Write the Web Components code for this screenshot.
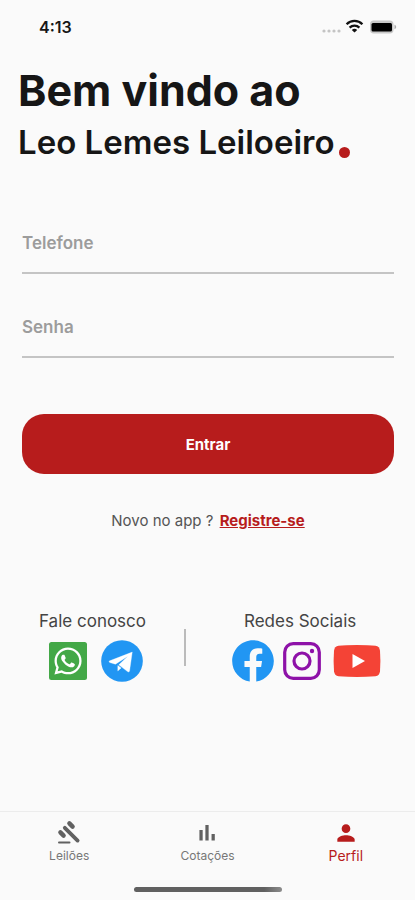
<!DOCTYPE html>
<html lang="pt-BR">
  <head>
    <meta charset="utf-8">
    <meta name="viewport" content="width=device-width, initial-scale=1">
    <title>Leo Lemes Leiloeiro</title>
    <style>
      body {
        margin: 0;
        background: #fafafa;
        color: #161616;
        font-family: Inter, Roboto, sans-serif;
      }
    </style>
  </head>
  <body>
    <template id="loginTemplate">
      <style>
        :host {
          display: flex;
          flex-direction: column;
          min-height: 100vh;
        }
        main {
          flex: 1;
          padding: 12px 21px 0 22px;
        }
        form {
          display: grid;
          gap: 24px;
          margin-top: 50px;
        }
        button {
          height: 60px;
          margin-top: 32px;
          border: 0;
          border-radius: 22px;
          background: #b71c1c;
          color: #fff;
          font: 700 15px Inter, Roboto, sans-serif;
        }
        .register {
          margin: 37px 0 0;
          text-align: center;
          font-size: 15px;
          line-height: 20px;
          color: #555;
        }
        .register a {
          color: #b71c1c;
          font-weight: 700;
          margin-left: 2px;
        }
        .contact {
          display: flex;
          justify-content: space-between;
          margin-top: 80px;
          padding: 0 10px 0 17px;
        }
        .contact hr {
          width: 2px;
          height: 37px;
          margin: 18px 8px 0 0;
          border: 0;
          background: #bbb;
        }
      </style>
      <status-bar time="4:13"></status-bar>
      <main>
        <welcome-title>
          <span slot="greeting">Bem vindo ao</span>
          <span slot="name">Leo Lemes Leiloeiro</span>
        </welcome-title>
        <form>
          <line-field label="Telefone" type="tel"></line-field>
          <line-field label="Senha" type="password"></line-field>
          <button type="button">Entrar</button>
        </form>
        <p class="register">Novo no app ? <a href="#registro">Registre-se</a></p>
        <div class="contact">
          <link-group>
            <span slot="title">Fale conosco</span>
            <social-link icon="whatsapp" label="WhatsApp"></social-link>
            <social-link icon="telegram" label="Telegram"></social-link>
          </link-group>
          <hr>
          <link-group>
            <span slot="title">Redes Sociais</span>
            <social-link icon="facebook" label="Facebook"></social-link>
            <social-link icon="instagram" label="Instagram"></social-link>
            <social-link icon="youtube" label="YouTube"></social-link>
          </link-group>
        </div>
      </main>
      <tab-bar>
        <tab-item icon="gavel" href="#leiloes">Leilões</tab-item>
        <tab-item icon="chart" href="#cotacoes">Cotações</tab-item>
        <tab-item icon="person" href="#perfil" active>Perfil</tab-item>
      </tab-bar>
    </template>

    <template id="statusTemplate">
      <style>
        :host {
          display: flex;
          align-items: center;
          height: 54px;
          padding: 0 18px 0 39px;
          font-size: 16px;
          font-weight: 600;
        }
        time {
          flex: 1;
        }
        svg {
          display: block;
        }
      </style>
      <time></time>
      <svg width="76" height="16" viewBox="0 0 76 16" aria-hidden="true">
        <g fill="#c4c4c4">
          <circle cx="3" cy="12" r="1.6"/><circle cx="8" cy="12" r="1.6"/>
          <circle cx="13" cy="12" r="1.6"/><circle cx="18" cy="12" r="1.6"/>
        </g>
        <g fill="none" stroke="#111" stroke-width="2.3">
          <path d="M25.6 5.3a11 11 0 0 1 15.8 0M28.6 8.6a7 7 0 0 1 9.8 0"/>
        </g>
        <path d="M33.5 13.6 30.8 11a3.9 3.9 0 0 1 5.4 0z" fill="#111"/>
        <rect x="49" y="1.5" width="23.5" height="13" rx="3.8" fill="#c8c8c8"/>
        <rect x="50.5" y="4" width="20.5" height="8.5" rx="1.5" fill="#000"/>
        <path d="M73.5 5.8c2.2.7 2.2 3.7 0 4.4z" fill="#aaa"/>
      </svg>
    </template>

    <template id="titleTemplate">
      <style>
        :host {
          display: block;
          margin-left: -4px;
        }
        h1 {
          margin: 0;
          font-weight: 600;
        }
        .greeting {
          display: block;
          font-size: 43px;
          font-weight: 700;
          line-height: 48px;
        }
        .name {
          display: flex;
          align-items: flex-end;
          gap: 4px;
          font-size: 33px;
          line-height: 44px;
          margin-top: 6px;
        }
        .dot {
          width: 11px;
          height: 11px;
          margin-bottom: 6px;
          border-radius: 50%;
          background: #b71c1c;
        }
      </style>
      <h1>
        <span class="greeting"><slot name="greeting"></slot></span>
        <span class="name"><slot name="name"></slot><i class="dot"></i></span>
      </h1>
    </template>

    <template id="fieldTemplate">
      <style>
        :host {
          display: grid;
          height: 60px;
          border-bottom: 2px solid #c4c4c4;
          box-sizing: border-box;
        }
        /* the label shares the cell with the input, like a hint */
        label, input {
          grid-area: 1 / 1;
          font: 600 17px Inter, Roboto, sans-serif;
        }
        label {
          align-self: center;
          color: #9c9c9c;
          pointer-events: none;
        }
        input {
          min-width: 0;
          padding: 0;
          border: 0;
          outline: 0;
          background: none;
          color: #333;
        }
        input:not(:placeholder-shown) + label {
          visibility: hidden;
        }
      </style>
      <input id="field" placeholder=" ">
      <label for="field"></label>
    </template>

    <template id="groupTemplate">
      <style>
        :host {
          display: block;
        }
        .title {
          padding-left: var(--title-indent, 0);
          font-size: 17px;
          line-height: 20px;
          color: #444;
        }
        .links {
          display: flex;
          gap: 8px;
          margin-top: 9px;
        }
      </style>
      <div class="title"><slot name="title"></slot></div>
      <div class="links"><slot></slot></div>
    </template>

    <template id="tabBarTemplate">
      <style>
        :host {
          display: block;
          height: 88px;
          border-top: 1px solid #ececec;
        }
        nav {
          display: grid;
          grid-template-columns: repeat(3, 1fr);
          height: 75px;
        }
        .home {
          width: 148px;
          height: 5px;
          margin: 0 auto;
          border-radius: 3px;
          background: linear-gradient(to right, #606060 88%, #8c8c8c);
        }
      </style>
      <nav><slot></slot></nav>
      <div class="home"></div>
    </template>

    <template id="tabTemplate">
      <style>
        :host {
          display: block;
          color: #777;
          font-size: 12px;
        }
        :host([active]) {
          color: #b71c1c;
          font-size: 14px;
        }
        a {
          display: flex;
          flex-direction: column;
          align-items: center;
          padding-top: 8px;
          color: inherit;
          text-decoration: none;
          line-height: 16px;
        }
        svg {
          display: block;
          width: 26px;
          height: 26px;
          margin-bottom: 2px;
          fill: #616161;
        }
        :host([active]) svg {
          fill: #b71c1c;
        }
      </style>
      <a><span class="icon"></span><slot></slot></a>
    </template>

    <login-page></login-page>

    <script>
      const socialIcons = {
        whatsapp: `<svg width="54" height="42" viewBox="-10 -2 54 42">
          <rect width="38" height="38" rx="2.5" fill="#43a847"/>
          <g transform="scale(.0848) translate(0 -32)" fill="#fff">
            <path fill-rule="evenodd" d="M223.9 413.2c-26.6 0-52.7-6.7-75.8-19.3L64 416l22.5-82.2c-13.9-24-21.2-51.3-21.2-79.3C65.4 167.1 136.5 96 223.9 96c42.4 0 82.2 16.5 112.2 46.5 29.9 30 47.9 69.8 47.9 112.2 0 87.4-72.7 158.5-160.1 158.5zM224 122.8c-72.7 0-131.8 59.1-131.9 131.8 0 24.9 7 49.2 20.2 70.1l3.1 5-13.3 48.6 49.9-13.1 4.8 2.9c20.2 12 43.4 18.4 67.1 18.4h.1c72.6 0 133.3-59.1 133.3-131.8 0-35.2-15.2-68.3-40.1-93.2-25-25-58-38.7-93.2-38.7z"/>
            <path d="M301.5 311.2c-3.3 9.3-19.1 17.7-26.7 18.8-12.6 1.9-22.4.9-47.5-9.9-39.7-17.2-65.7-57.2-67.7-59.8-2-2.6-16.2-21.5-16.2-41s10.2-29.1 13.9-33.1c3.6-4 7.9-5 10.6-5 2.6 0 5.3 0 7.6.1 2.4.1 5.7-.9 8.9 6.8 3.3 7.9 11.2 27.4 12.2 29.4s1.7 4.3.3 6.9c-7.6 15.2-15.7 14.6-11.6 21.6 15.3 26.3 30.6 35.4 53.9 47.1 4 2 6.3 1.7 8.6-1 2.3-2.6 9.9-11.6 12.5-15.5 2.6-4 5.3-3.3 8.9-2 3.6 1.3 23.1 10.9 27.1 12.9s6.6 3 7.6 4.6c.9 1.9.9 9.9-2.4 19.1z"/>
          </g></svg>`,
        telegram: `<svg width="42" height="42" viewBox="0 0 125 125">
          <circle cx="62.5" cy="62.5" r="62" fill="#2196f3"/>
          <path d="M93 36 26 62c-3 1-2 4 0 5l17 5 37-24-27 26 26 20c3 2 5 1 6-2zM50 76v16l10-9z" fill="#fff" stroke="#fff" stroke-linejoin="round"/></svg>`,
        facebook: `<svg width="42" height="42" viewBox="6 6 500 500">
          <path fill="#2196f3" d="M504 256C504 119 393 8 256 8S8 119 8 256c0 123.8 90.7 226.4 209.3 245V327.7h-63V256h63v-54.6c0-62.2 37-96.5 93.6-96.5 27.2 0 55.5 4.8 55.5 4.8v61h-31.2c-30.8 0-40.4 19.2-40.4 38.8V256h68.7l-11 71.7h-57.7V501C413.3 482.4 504 379.8 504 256z"/></svg>`,
        instagram: `<svg width="40" height="42" viewBox="0 0 40 42" fill="none" stroke="#8e12a8" stroke-width="3.2">
          <rect x="2.7" y="3.7" width="34.6" height="34.6" rx="8.5"/>
          <circle cx="20" cy="21" r="8"/>
          <circle cx="30" cy="11" r="2.2" fill="#8e12a8" stroke="none"/></svg>`,
        youtube: `<svg width="54" height="42" viewBox="0 0 54 42">
          <path fill="#f44336" d="M27 5q12 0 18.5.7 4 .5 4.5 5 .8 10.3 0 20.6-.5 4.5-4.5 5-18.5 1.3-37 0-4-.5-4.5-5-.8-10.3 0-20.6.5-4.5 4.5-5Q15 5 27 5z"/>
          <path fill="#fff" d="M22.5 14v14L35 21z"/></svg>`
      };

      const tabIcons = {
        gavel: `<svg viewBox="-1 0 26 26">
          <g fill="none" stroke="#616161" stroke-linecap="round">
            <path stroke-width="3.8" d="M7.8 7.8l12.8 12.8"/>
            <path stroke-width="4.4" d="M12.4 3.4l3.2 3.2M3.4 12.4l3.2 3.2"/>
            <path stroke-width="2" d="M2 22.5h10.5"/>
          </g></svg>`,
        chart: `<svg viewBox="0 0 24 24"><path d="M5 9.2h3V19H5zM10.5 4.5h3V19h-3zM16.2 13h3v6h-3z"/></svg>`,
        person: `<svg viewBox="0 0 24 24"><path d="M12 12c2.2 0 4-1.8 4-4s-1.8-4-4-4-4 1.8-4 4 1.8 4 4 4zm0 2c-2.7 0-8 1.3-8 4v2h16v-2c0-2.7-5.3-4-8-4z"/></svg>`
      };

      class TemplateElement extends HTMLElement {
        constructor(templateId) {
          super();
          this.attachShadow({ mode: 'open' });
          this.shadowRoot.append(
            document.getElementById(templateId).content.cloneNode(true)
          );
        }
      }

      customElements.define('status-bar', class extends TemplateElement {
        constructor() {
          super('statusTemplate');
        }

        connectedCallback() {
          this.shadowRoot.querySelector('time').textContent = this.getAttribute('time');
        }
      });

      customElements.define('welcome-title', class extends TemplateElement {
        constructor() {
          super('titleTemplate');
        }
      });

      customElements.define('line-field', class extends TemplateElement {
        constructor() {
          super('fieldTemplate');
        }

        connectedCallback() {
          this.shadowRoot.querySelector('label').textContent = this.getAttribute('label');
          this.shadowRoot.querySelector('input').type = this.getAttribute('type');
        }
      });

      customElements.define('link-group', class extends TemplateElement {
        constructor() {
          super('groupTemplate');
        }

        connectedCallback() {
          // the wider group indents its title over the icons
          if (this.querySelectorAll('social-link').length > 2) {
            this.style.setProperty('--title-indent', '12px');
          }
        }
      });

      class SocialLink extends HTMLElement {
        connectedCallback() {
          const root = this.attachShadow({ mode: 'open' });
          root.innerHTML = `
            <style>
              :host { display: block; }
              a, svg { display: block; }
            </style>
            <a href="#${this.getAttribute('icon')}" aria-label="${this.getAttribute('label')}">
              ${socialIcons[this.getAttribute('icon')]}
            </a>`;
        }
      }

      customElements.define('social-link', SocialLink);

      customElements.define('tab-bar', class extends TemplateElement {
        constructor() {
          super('tabBarTemplate');
        }
      });

      customElements.define('tab-item', class extends TemplateElement {
        constructor() {
          super('tabTemplate');
        }

        connectedCallback() {
          this.shadowRoot.querySelector('a').href = this.getAttribute('href');
          this.shadowRoot.querySelector('.icon').innerHTML = tabIcons[this.getAttribute('icon')];
        }
      });

      customElements.define('login-page', class extends TemplateElement {
        constructor() {
          super('loginTemplate');
        }
      });
    </script>
  </body>
</html>
